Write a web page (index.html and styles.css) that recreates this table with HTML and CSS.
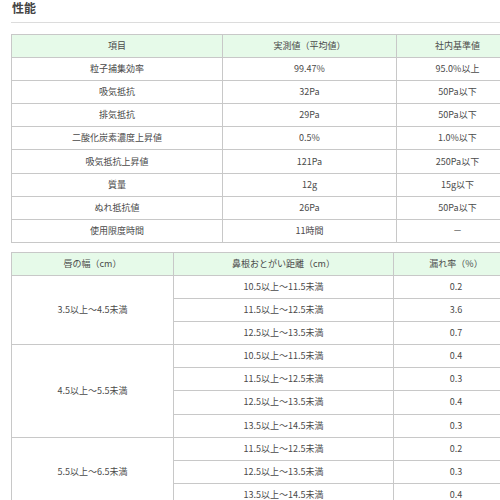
FILE: index.html
```html
<!DOCTYPE html>
<html lang="ja">
<head>
<meta charset="utf-8">
<link rel="stylesheet" href="styles.css">
</head>
<body>
<div class="page">
  <h2 class="title">性能</h2>
  <table class="spec">
    <colgroup><col class="c1"><col class="c2"><col class="c3"></colgroup>
    <tr><th>項目</th><th>実測値（平均値）</th><th>社内基準値</th></tr>
    <tr><td>粒子捕集効率</td><td>99.47%</td><td>95.0%以上</td></tr>
    <tr><td>吸気抵抗</td><td>32Pa</td><td>50Pa以下</td></tr>
    <tr><td>排気抵抗</td><td>29Pa</td><td>50Pa以下</td></tr>
    <tr><td>二酸化炭素濃度上昇値</td><td>0.5%</td><td>1.0%以下</td></tr>
    <tr><td>吸気抵抗上昇値</td><td>121Pa</td><td>250Pa以下</td></tr>
    <tr><td>質量</td><td>12g</td><td>15g以下</td></tr>
    <tr><td>ぬれ抵抗値</td><td>26Pa</td><td>50Pa以下</td></tr>
    <tr><td>使用限度時間</td><td>11時間</td><td>－</td></tr>
  </table>
  <table class="spec fit">
    <colgroup><col class="d1"><col class="d2"><col class="d3"></colgroup>
    <tr><th>唇の幅（cm）</th><th>鼻根おとがい距離（cm）</th><th>漏れ率（%）</th></tr>
    <tr><td rowspan="3">3.5以上～4.5未満</td><td>10.5以上～11.5未満</td><td>0.2</td></tr>
    <tr><td>11.5以上～12.5未満</td><td>3.6</td></tr>
    <tr><td>12.5以上～13.5未満</td><td>0.7</td></tr>
    <tr><td rowspan="4">4.5以上～5.5未満</td><td>10.5以上～11.5未満</td><td>0.4</td></tr>
    <tr><td>11.5以上～12.5未満</td><td>0.3</td></tr>
    <tr><td>12.5以上～13.5未満</td><td>0.4</td></tr>
    <tr><td>13.5以上～14.5未満</td><td>0.3</td></tr>
    <tr><td rowspan="3">5.5以上～6.5未満</td><td>11.5以上～12.5未満</td><td>0.2</td></tr>
    <tr><td>12.5以上～13.5未満</td><td>0.3</td></tr>
    <tr><td>13.5以上～14.5未満</td><td>0.4</td></tr>
  </table>
</div>
</body>
</html>
```
FILE: styles.css
```css
html, body {
  margin: 0;
  padding: 0;
  background: #fff;
  overflow: hidden;
}
body {
  font-family: "Noto Sans CJK JP", "Noto Sans", sans-serif;
  color: #4a4a4a;
}
.page {
  width: 520px;
  padding: 0 0 0 11px;
}
.title {
  margin: 0;
  padding: 0 0 0 1px;
  font-size: 12px;
  line-height: 16px;
  font-weight: bold;
  color: #444;
  height: 22px;
  border-bottom: 1px solid #dcdcdc;
}
.spec {
  border-collapse: collapse;
  table-layout: fixed;
  width: 507px;
  margin-top: 11px;
  font-size: 9px;
}
.spec.fit {
  margin-top: 9px;
}
.spec th, .spec td {
  border: 1px solid #c8c8c8;
  padding: 0;
  height: 22.1px;
  text-align: center;
  vertical-align: middle;
  font-weight: normal;
  line-height: 12px;
  white-space: nowrap;
}
.spec th {
  background: #e6fae9;
}
.c1 { width: 211px; }
.c2 { width: 174px; }
.c3 { width: 122px; }
.d1 { width: 162px; }
.d2 { width: 220px; }
.d3 { width: 125px; }
```
